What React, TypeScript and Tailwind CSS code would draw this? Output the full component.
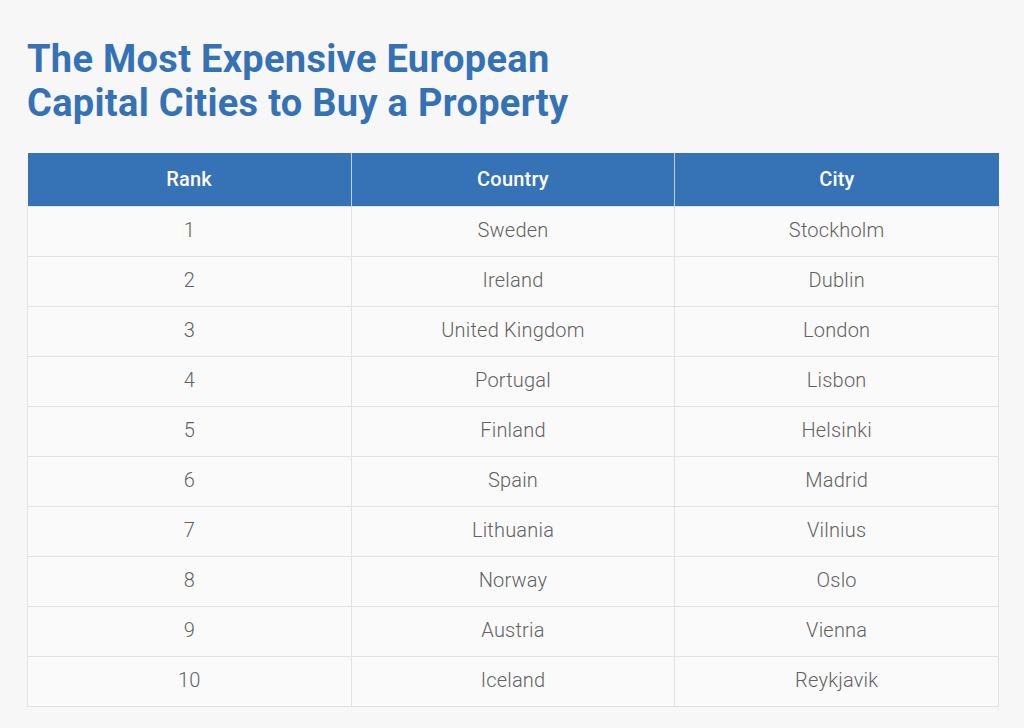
const rows = [
  ['1', 'Sweden', 'Stockholm'],
  ['2', 'Ireland', 'Dublin'],
  ['3', 'United Kingdom', 'London'],
  ['4', 'Portugal', 'Lisbon'],
  ['5', 'Finland', 'Helsinki'],
  ['6', 'Spain', 'Madrid'],
  ['7', 'Lithuania', 'Vilnius'],
  ['8', 'Norway', 'Oslo'],
  ['9', 'Austria', 'Vienna'],
  ['10', 'Iceland', 'Reykjavik'],
];

export default function App() {
  return (
    <div className="min-h-[728px] w-full bg-[#f7f7f7] px-[27px] pt-[37px] font-['Roboto',sans-serif]">
      <h1 className="text-[38px] font-bold leading-[44px] tracking-[0.3px] text-[#3572b5]">
        The Most Expensive European
        <br />
        Capital Cities to Buy a Property
      </h1>

      <table className="mt-[28px] w-[972px] table-fixed border-collapse">
        <thead>
          <tr className="h-[53px] bg-[#3573b6] text-[20px] font-medium tracking-[0.2px] text-white">
            <th className="border-r border-[#bcd3ec] font-medium">Rank</th>
            <th className="border-r border-[#bcd3ec] font-medium">Country</th>
            <th className="font-medium">City</th>
          </tr>
        </thead>
        <tbody className="text-[20px] font-light tracking-[0.2px] text-[#626262]">
          {rows.map(([rank, country, city]) => (
            <tr key={rank} className="h-[50px] bg-[#fafafa]">
              <td className="border border-[#e3e3e3] pb-[3px] text-center">{rank}</td>
              <td className="border border-[#e3e3e3] pb-[3px] text-center">{country}</td>
              <td className="border border-[#e3e3e3] pb-[3px] text-center">{city}</td>
            </tr>
          ))}
        </tbody>
      </table>
    </div>
  );
}
